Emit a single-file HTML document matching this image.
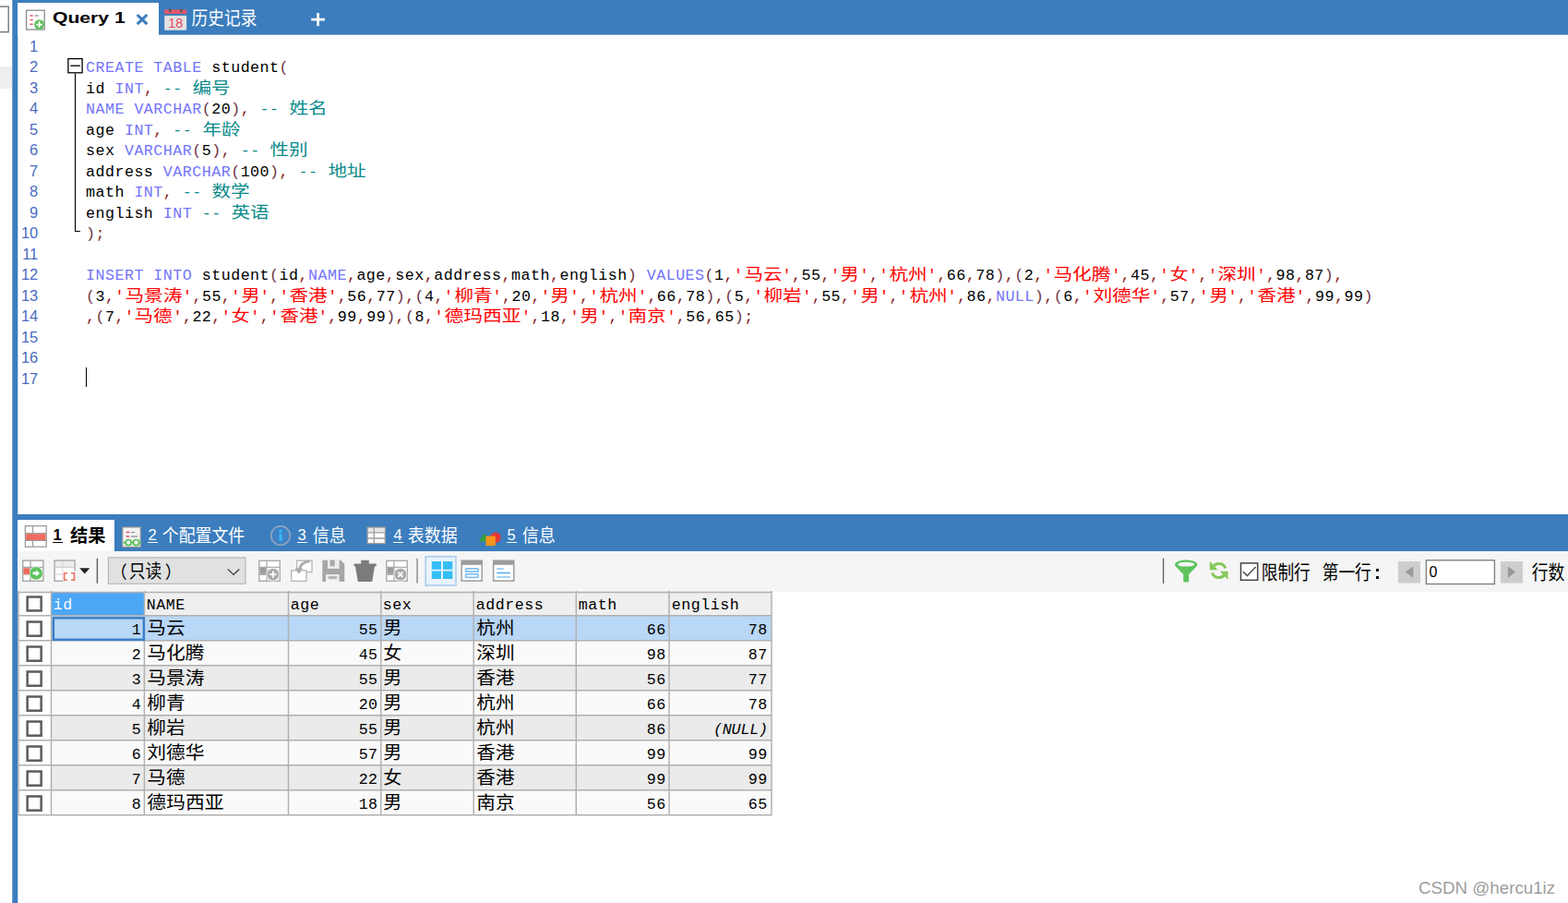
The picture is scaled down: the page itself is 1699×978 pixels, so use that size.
<!DOCTYPE html>
<html lang="zh"><head><meta charset="utf-8"><title>SQLyog</title>
<style>

html,body{margin:0;padding:0}
body{width:1699px;height:978px;overflow:hidden;background:#fff;position:relative;
 font-family:"Liberation Sans",sans-serif;color:#000}
.a{position:absolute}
svg.cj{overflow:visible;vertical-align:baseline;display:inline-block}
svg.cj text{font-family:"Liberation Sans","Noto Sans CJK SC",sans-serif;letter-spacing:0;font-style:normal;font-weight:normal}
svg.cj text.b{font-weight:bold}
.mono{font-family:"Liberation Mono",monospace;font-size:16.664px;letter-spacing:0.48px}
.ln{position:absolute;left:93px;height:22.5px;line-height:22.5px;white-space:pre;
 font-family:"Liberation Mono",monospace;font-size:16.664px;letter-spacing:0.48px;color:#000}
.no{position:absolute;left:18.8px;width:22.5px;text-align:right;height:22.5px;line-height:22.5px;
 font-size:16.5px;color:#4a6ac0}
.k{color:#7474fa} .c{color:#0a8a8a} .s{color:#ff0000} .o{color:#861c1c} .p{color:#6e3446}
.u{text-decoration:underline}

</style></head>
<body>
<!-- window chrome -->
<svg class="a" style="left:0;top:0" width="20" height="40" viewBox="0 0 20 40"><rect x="-2" y="7.1" width="11.2" height="27.6" fill="#fff" stroke="#767676" stroke-width="1.4"/></svg>
<div class="a" style="left:0;top:72px;width:13px;height:24px;background:#eeeeee"></div>
<svg class="a" style="left:12px;top:0" width="9" height="978" viewBox="0 0 9 978"><rect x="1.3" y="0" width="6" height="978" fill="#3b7dbd"/></svg>
<div class="a" style="left:19px;top:0;width:1680px;height:37px;background:#3b7dbd"></div>
<div class="a" style="left:19px;top:37px;width:1680px;height:1px;background:#7aa7d2"></div>
<div class="a" style="left:19px;top:3px;width:153px;height:35px;background:#fff"></div>
<div class="a" style="left:19px;top:556.8px;width:1680px;height:40.2px;background:#3b7dbd"></div>
<div class="a" style="left:19px;top:563px;width:105px;height:34px;background:#fff"></div>
<div class="a" style="left:19px;top:597px;width:1680px;height:43.7px;background:#f5f5f5"></div>
<!-- editor -->
<div class="no" style="top:38.5px">1</div>
<div class="no" style="top:61px">2</div>
<div class="ln" style="top:63px"><span class="k">CREATE</span> <span class="k">TABLE</span> student<span class="p">(</span></div>
<div class="no" style="top:83.5px">3</div>
<div class="ln" style="top:85.5px">id <span class="k">INT</span><span class="o">,</span> <span class="c">-- <svg class="cj" role="img" aria-label="编号" width="42" height="8" viewBox="0 -8 42 8" fill="#0a8a8a" style=""><text x="0.4" y="0" font-size="17.3" textLength="41.2" lengthAdjust="spacingAndGlyphs">编号</text></svg></span></div>
<div class="no" style="top:106px">4</div>
<div class="ln" style="top:108px"><span class="k">NAME</span> <span class="k">VARCHAR</span><span class="p">(</span>20<span class="p">)</span><span class="o">,</span> <span class="c">-- <svg class="cj" role="img" aria-label="姓名" width="42" height="8" viewBox="0 -8 42 8" fill="#0a8a8a" style=""><text x="0.4" y="0" font-size="17.3" textLength="41.2" lengthAdjust="spacingAndGlyphs">姓名</text></svg></span></div>
<div class="no" style="top:128.5px">5</div>
<div class="ln" style="top:130.5px">age <span class="k">INT</span><span class="o">,</span> <span class="c">-- <svg class="cj" role="img" aria-label="年龄" width="42" height="8" viewBox="0 -8 42 8" fill="#0a8a8a" style=""><text x="0.4" y="0" font-size="17.3" textLength="41.2" lengthAdjust="spacingAndGlyphs">年龄</text></svg></span></div>
<div class="no" style="top:151px">6</div>
<div class="ln" style="top:153px">sex <span class="k">VARCHAR</span><span class="p">(</span>5<span class="p">)</span><span class="o">,</span> <span class="c">-- <svg class="cj" role="img" aria-label="性别" width="42" height="8" viewBox="0 -8 42 8" fill="#0a8a8a" style=""><text x="0.4" y="0" font-size="17.3" textLength="41.2" lengthAdjust="spacingAndGlyphs">性别</text></svg></span></div>
<div class="no" style="top:173.5px">7</div>
<div class="ln" style="top:175.5px">address <span class="k">VARCHAR</span><span class="p">(</span>100<span class="p">)</span><span class="o">,</span> <span class="c">-- <svg class="cj" role="img" aria-label="地址" width="42" height="8" viewBox="0 -8 42 8" fill="#0a8a8a" style=""><text x="0.4" y="0" font-size="17.3" textLength="41.2" lengthAdjust="spacingAndGlyphs">地址</text></svg></span></div>
<div class="no" style="top:196px">8</div>
<div class="ln" style="top:198px">math <span class="k">INT</span><span class="o">,</span> <span class="c">-- <svg class="cj" role="img" aria-label="数学" width="42" height="8" viewBox="0 -8 42 8" fill="#0a8a8a" style=""><text x="0.4" y="0" font-size="17.3" textLength="41.2" lengthAdjust="spacingAndGlyphs">数学</text></svg></span></div>
<div class="no" style="top:218.5px">9</div>
<div class="ln" style="top:220.5px">english <span class="k">INT</span> <span class="c">-- <svg class="cj" role="img" aria-label="英语" width="42" height="8" viewBox="0 -8 42 8" fill="#0a8a8a" style=""><text x="0.4" y="0" font-size="17.3" textLength="41.2" lengthAdjust="spacingAndGlyphs">英语</text></svg></span></div>
<div class="no" style="top:241px">10</div>
<div class="ln" style="top:243px"><span class="p">)</span><span class="o">;</span></div>
<div class="no" style="top:263.5px">11</div>
<div class="no" style="top:286px">12</div>
<div class="ln" style="top:288px"><span class="k">INSERT</span> <span class="k">INTO</span> student<span class="p">(</span>id<span class="o">,</span><span class="k">NAME</span><span class="o">,</span>age<span class="o">,</span>sex<span class="o">,</span>address<span class="o">,</span>math<span class="o">,</span>english<span class="p">)</span> <span class="k">VALUES</span><span class="p">(</span>1<span class="o">,</span><span class="s">'<svg class="cj" role="img" aria-label="马云" width="42" height="8" viewBox="0 -8 42 8" fill="#ff0000" style=""><text x="0.4" y="0" font-size="17.3" textLength="41.2" lengthAdjust="spacingAndGlyphs">马云</text></svg>'</span><span class="o">,</span>55<span class="o">,</span><span class="s">'<svg class="cj" role="img" aria-label="男" width="21" height="8" viewBox="0 -8 21 8" fill="#ff0000" style=""><text x="0.4" y="0" font-size="17.3" textLength="20.2" lengthAdjust="spacingAndGlyphs">男</text></svg>'</span><span class="o">,</span><span class="s">'<svg class="cj" role="img" aria-label="杭州" width="42" height="8" viewBox="0 -8 42 8" fill="#ff0000" style=""><text x="0.4" y="0" font-size="17.3" textLength="41.2" lengthAdjust="spacingAndGlyphs">杭州</text></svg>'</span><span class="o">,</span>66<span class="o">,</span>78<span class="p">)</span><span class="o">,</span><span class="p">(</span>2<span class="o">,</span><span class="s">'<svg class="cj" role="img" aria-label="马化腾" width="63" height="8" viewBox="0 -8 63 8" fill="#ff0000" style=""><text x="0.4" y="0" font-size="17.3" textLength="62.2" lengthAdjust="spacingAndGlyphs">马化腾</text></svg>'</span><span class="o">,</span>45<span class="o">,</span><span class="s">'<svg class="cj" role="img" aria-label="女" width="21" height="8" viewBox="0 -8 21 8" fill="#ff0000" style=""><text x="0.4" y="0" font-size="17.3" textLength="20.2" lengthAdjust="spacingAndGlyphs">女</text></svg>'</span><span class="o">,</span><span class="s">'<svg class="cj" role="img" aria-label="深圳" width="42" height="8" viewBox="0 -8 42 8" fill="#ff0000" style=""><text x="0.4" y="0" font-size="17.3" textLength="41.2" lengthAdjust="spacingAndGlyphs">深圳</text></svg>'</span><span class="o">,</span>98<span class="o">,</span>87<span class="p">)</span><span class="o">,</span></div>
<div class="no" style="top:308.5px">13</div>
<div class="ln" style="top:310.5px"><span class="p">(</span>3<span class="o">,</span><span class="s">'<svg class="cj" role="img" aria-label="马景涛" width="63" height="8" viewBox="0 -8 63 8" fill="#ff0000" style=""><text x="0.4" y="0" font-size="17.3" textLength="62.2" lengthAdjust="spacingAndGlyphs">马景涛</text></svg>'</span><span class="o">,</span>55<span class="o">,</span><span class="s">'<svg class="cj" role="img" aria-label="男" width="21" height="8" viewBox="0 -8 21 8" fill="#ff0000" style=""><text x="0.4" y="0" font-size="17.3" textLength="20.2" lengthAdjust="spacingAndGlyphs">男</text></svg>'</span><span class="o">,</span><span class="s">'<svg class="cj" role="img" aria-label="香港" width="42" height="8" viewBox="0 -8 42 8" fill="#ff0000" style=""><text x="0.4" y="0" font-size="17.3" textLength="41.2" lengthAdjust="spacingAndGlyphs">香港</text></svg>'</span><span class="o">,</span>56<span class="o">,</span>77<span class="p">)</span><span class="o">,</span><span class="p">(</span>4<span class="o">,</span><span class="s">'<svg class="cj" role="img" aria-label="柳青" width="42" height="8" viewBox="0 -8 42 8" fill="#ff0000" style=""><text x="0.4" y="0" font-size="17.3" textLength="41.2" lengthAdjust="spacingAndGlyphs">柳青</text></svg>'</span><span class="o">,</span>20<span class="o">,</span><span class="s">'<svg class="cj" role="img" aria-label="男" width="21" height="8" viewBox="0 -8 21 8" fill="#ff0000" style=""><text x="0.4" y="0" font-size="17.3" textLength="20.2" lengthAdjust="spacingAndGlyphs">男</text></svg>'</span><span class="o">,</span><span class="s">'<svg class="cj" role="img" aria-label="杭州" width="42" height="8" viewBox="0 -8 42 8" fill="#ff0000" style=""><text x="0.4" y="0" font-size="17.3" textLength="41.2" lengthAdjust="spacingAndGlyphs">杭州</text></svg>'</span><span class="o">,</span>66<span class="o">,</span>78<span class="p">)</span><span class="o">,</span><span class="p">(</span>5<span class="o">,</span><span class="s">'<svg class="cj" role="img" aria-label="柳岩" width="42" height="8" viewBox="0 -8 42 8" fill="#ff0000" style=""><text x="0.4" y="0" font-size="17.3" textLength="41.2" lengthAdjust="spacingAndGlyphs">柳岩</text></svg>'</span><span class="o">,</span>55<span class="o">,</span><span class="s">'<svg class="cj" role="img" aria-label="男" width="21" height="8" viewBox="0 -8 21 8" fill="#ff0000" style=""><text x="0.4" y="0" font-size="17.3" textLength="20.2" lengthAdjust="spacingAndGlyphs">男</text></svg>'</span><span class="o">,</span><span class="s">'<svg class="cj" role="img" aria-label="杭州" width="42" height="8" viewBox="0 -8 42 8" fill="#ff0000" style=""><text x="0.4" y="0" font-size="17.3" textLength="41.2" lengthAdjust="spacingAndGlyphs">杭州</text></svg>'</span><span class="o">,</span>86<span class="o">,</span><span class="k">NULL</span><span class="p">)</span><span class="o">,</span><span class="p">(</span>6<span class="o">,</span><span class="s">'<svg class="cj" role="img" aria-label="刘德华" width="63" height="8" viewBox="0 -8 63 8" fill="#ff0000" style=""><text x="0.4" y="0" font-size="17.3" textLength="62.2" lengthAdjust="spacingAndGlyphs">刘德华</text></svg>'</span><span class="o">,</span>57<span class="o">,</span><span class="s">'<svg class="cj" role="img" aria-label="男" width="21" height="8" viewBox="0 -8 21 8" fill="#ff0000" style=""><text x="0.4" y="0" font-size="17.3" textLength="20.2" lengthAdjust="spacingAndGlyphs">男</text></svg>'</span><span class="o">,</span><span class="s">'<svg class="cj" role="img" aria-label="香港" width="42" height="8" viewBox="0 -8 42 8" fill="#ff0000" style=""><text x="0.4" y="0" font-size="17.3" textLength="41.2" lengthAdjust="spacingAndGlyphs">香港</text></svg>'</span><span class="o">,</span>99<span class="o">,</span>99<span class="p">)</span></div>
<div class="no" style="top:331px">14</div>
<div class="ln" style="top:333px"><span class="o">,</span><span class="p">(</span>7<span class="o">,</span><span class="s">'<svg class="cj" role="img" aria-label="马德" width="42" height="8" viewBox="0 -8 42 8" fill="#ff0000" style=""><text x="0.4" y="0" font-size="17.3" textLength="41.2" lengthAdjust="spacingAndGlyphs">马德</text></svg>'</span><span class="o">,</span>22<span class="o">,</span><span class="s">'<svg class="cj" role="img" aria-label="女" width="21" height="8" viewBox="0 -8 21 8" fill="#ff0000" style=""><text x="0.4" y="0" font-size="17.3" textLength="20.2" lengthAdjust="spacingAndGlyphs">女</text></svg>'</span><span class="o">,</span><span class="s">'<svg class="cj" role="img" aria-label="香港" width="42" height="8" viewBox="0 -8 42 8" fill="#ff0000" style=""><text x="0.4" y="0" font-size="17.3" textLength="41.2" lengthAdjust="spacingAndGlyphs">香港</text></svg>'</span><span class="o">,</span>99<span class="o">,</span>99<span class="p">)</span><span class="o">,</span><span class="p">(</span>8<span class="o">,</span><span class="s">'<svg class="cj" role="img" aria-label="德玛西亚" width="84" height="8" viewBox="0 -8 84 8" fill="#ff0000" style=""><text x="0.4" y="0" font-size="17.3" textLength="83.2" lengthAdjust="spacingAndGlyphs">德玛西亚</text></svg>'</span><span class="o">,</span>18<span class="o">,</span><span class="s">'<svg class="cj" role="img" aria-label="男" width="21" height="8" viewBox="0 -8 21 8" fill="#ff0000" style=""><text x="0.4" y="0" font-size="17.3" textLength="20.2" lengthAdjust="spacingAndGlyphs">男</text></svg>'</span><span class="o">,</span><span class="s">'<svg class="cj" role="img" aria-label="南京" width="42" height="8" viewBox="0 -8 42 8" fill="#ff0000" style=""><text x="0.4" y="0" font-size="17.3" textLength="41.2" lengthAdjust="spacingAndGlyphs">南京</text></svg>'</span><span class="o">,</span>56<span class="o">,</span>65<span class="p">)</span><span class="o">;</span></div>
<div class="no" style="top:353.5px">15</div>
<div class="no" style="top:376px">16</div>
<div class="no" style="top:398.5px">17</div>
<svg class="a" style="left:70px;top:60.7px" width="24" height="202.5" viewBox="0 0 24 202.5">
<rect x="3.9" y="2.6" width="15.2" height="15.2" fill="#fff" stroke="#000" stroke-width="1.3"/>
<path d="M6.3 10.2H16.9" stroke="#000" stroke-width="1.3"/>
<path d="M11.5 18.4V189.5H17" fill="none" stroke="#000" stroke-width="1.1"/>
</svg>
<div class="a" style="left:92.5px;top:397.6px;width:1.3px;height:21.6px;background:#000"></div>
<!-- top tabs -->
<svg class="a" style="left:27px;top:9px" width="24" height="25" viewBox="0 0 24 25">
<rect x="1.6" y="2.2" width="19.6" height="20.8" fill="#fff" stroke="#8a8a8a" stroke-width="1.3"/>
<path d="M5.5 8h3.2M5.5 12.6h3.2M5.5 17.2h3.2" stroke="#e8505b" stroke-width="1.5"/>
<path d="M10.6 8h4.2" stroke="#9a9a9a" stroke-width="1.4"/>
<circle cx="15.6" cy="17.6" r="5.4" fill="#5cc05c"/>
<path d="M15.6 14.3v6.6M12.3 17.6h6.6" stroke="#fff" stroke-width="1.7"/>
</svg>
<svg class="a" style="left:53.3px;top:7.14px;overflow:visible" width="86.8" height="24.9" viewBox="0 0 86.8 24.9"><text x="4" y="18.26" font-family="Liberation Sans, sans-serif" font-size="16.6" font-weight="bold" fill="#000" textLength="78.8" lengthAdjust="spacingAndGlyphs">Query 1</text></svg>
<svg class="a" style="left:146px;top:13px" width="16" height="16" viewBox="0 0 16 16">
<path d="M2.7 3l10.6 10.2M13.3 3L2.7 13.2" stroke="#3b7dbd" stroke-width="3.1" fill="none"/></svg>
<svg class="a" style="left:177px;top:8px" width="27" height="26" viewBox="0 0 27 26">
<rect x="1.2" y="2.5" width="23.9" height="4.4" fill="#ec5469"/>
<rect x="1.2" y="8.9" width="23.9" height="15.8" fill="#e3e3e3"/>
<rect x="6.1" y="1.2" width="2.5" height="4.2" rx="1" fill="#5a5f66"/>
<rect x="18.2" y="1.2" width="2.5" height="4.2" rx="1" fill="#5a5f66"/>
<text x="13.2" y="22.2" text-anchor="middle" font-family="Liberation Sans, sans-serif" font-size="14.5" fill="#e8465c">18</text>
</svg>
<svg class="cj" role="img" aria-label="历史记录" width="70" height="8" viewBox="0 -8 70 8" fill="#fff" style="position:absolute;left:208px;top:19px"><text x="-0.4" y="0" font-size="20.2" textLength="70.8" lengthAdjust="spacingAndGlyphs">历史记录</text></svg>
<svg class="a" style="left:335px;top:12px" width="20" height="20" viewBox="0 0 20 20"><path d="M9.6 1.9v14.4M2.3 9.1h14.6" stroke="#fff" stroke-width="2.7"/></svg>
<!-- bottom tabs -->
<svg class="a" style="left:26px;top:568px" width="26" height="26" viewBox="0 0 26 26">
<rect x="1.4" y="1.6" width="22.8" height="22.6" fill="#fff" stroke="#9b9b9b" stroke-width="1.3"/>
<path d="M9.6 1.6v22.6M1.4 9.6h22.8M1.4 17.4h22.8" stroke="#9b9b9b" stroke-width="1.2"/>
<rect x="2.1" y="10.2" width="21.4" height="6.8" fill="#ee6c5f"/>
</svg>
<div class="a" style="left:57.6px;top:567.51px;line-height:24px;height:24px;font-size:16.6px;color:#000;white-space:pre;font-weight:bold;">1</div><div class="a" style="left:57.2px;top:586.9px;width:10.6px;height:1.6px;background:#000"></div>
<svg class="cj" role="img" aria-label="结果" width="38.4" height="8" viewBox="0 -8 38.4 8" fill="#000" style="position:absolute;left:75.6px;top:579.2px"><text class="b" x="0" y="0" font-size="19.6" textLength="38.4" lengthAdjust="spacingAndGlyphs">结果</text></svg>
<svg class="a" style="left:131px;top:569px" width="26" height="26" viewBox="0 0 26 26">
<rect x="1.8" y="2" width="19.4" height="21.4" fill="#f4f4f4" stroke="#9a9a9a" stroke-width="1.2"/>
<path d="M5.6 7.6h3.6M5.6 12h3.6" stroke="#ea4f5e" stroke-width="1.5"/>
<path d="M10.8 7.6h4.4M10.8 12h7.2" stroke="#9a9a9a" stroke-width="1.4"/>
<circle cx="8.2" cy="18.6" r="3.1" fill="#f4f4f4" stroke="#58c058" stroke-width="1.7"/>
<circle cx="16.6" cy="18.6" r="3.1" fill="#f4f4f4" stroke="#58c058" stroke-width="1.7"/>
<path d="M11.3 18.4h2.2M2.6 18.6h2.5M19.7 18.6h2.6" stroke="#58c058" stroke-width="1.6"/>
</svg>
<div class="a" style="left:160.6px;top:567.51px;line-height:24px;height:24px;font-size:16.6px;color:#fff;white-space:pre;">2</div><div class="a" style="left:160.2px;top:586.9px;width:10.6px;height:1.2px;background:#fff"></div>
<svg class="cj" role="img" aria-label="个配置文件" width="89" height="8" viewBox="0 -8 89 8" fill="#fff" style="position:absolute;left:176.3px;top:579.2px"><text x="-0.25" y="0" font-size="19.3" textLength="89.5" lengthAdjust="spacingAndGlyphs">个配置文件</text></svg>
<svg class="a" style="left:291px;top:567px" width="26" height="26" viewBox="0 0 26 26">
<circle cx="13" cy="13" r="10.3" fill="#3f82c4" stroke="#8fa6c0" stroke-width="1.6"/>
<circle cx="13" cy="8.2" r="1.8" fill="#35b8f6"/><rect x="11.5" y="11.2" width="3" height="7.8" fill="#35b8f6"/>
</svg>
<div class="a" style="left:322.4px;top:567.51px;line-height:24px;height:24px;font-size:16.6px;color:#fff;white-space:pre;">3</div><div class="a" style="left:322px;top:586.9px;width:10.6px;height:1.2px;background:#fff"></div>
<svg class="cj" role="img" aria-label="信息" width="35.6" height="8" viewBox="0 -8 35.6 8" fill="#fff" style="position:absolute;left:338.6px;top:579.2px"><text x="-0.25" y="0" font-size="19.3" textLength="36.1" lengthAdjust="spacingAndGlyphs">信息</text></svg>
<svg class="a" style="left:396px;top:569px" width="24" height="22" viewBox="0 0 24 22">
<rect x="2.2" y="2.2" width="19" height="17.4" fill="#fff" stroke="#9e9e9e" stroke-width="1.4"/>
<rect x="2.9" y="2.9" width="17.6" height="4.5" fill="#e6e6e6"/>
<path d="M9.3 2.2v17.4M2.2 7.8h19M2.2 14h19" stroke="#9e9e9e" stroke-width="1.3"/>
</svg>
<div class="a" style="left:426.4px;top:567.51px;line-height:24px;height:24px;font-size:16.6px;color:#fff;white-space:pre;">4</div><div class="a" style="left:426px;top:586.9px;width:10.6px;height:1.2px;background:#fff"></div>
<svg class="cj" role="img" aria-label="表数据" width="53.4" height="8" viewBox="0 -8 53.4 8" fill="#fff" style="position:absolute;left:442.3px;top:579.2px"><text x="-0.25" y="0" font-size="19.3" textLength="53.9" lengthAdjust="spacingAndGlyphs">表数据</text></svg>
<svg class="a" style="left:518px;top:574px" width="27" height="19" viewBox="0 0 27 19">
<path d="M1 12.6L6.9 3.2l5.6 9.4z" fill="#359e3c"/>
<circle cx="19" cy="8.2" r="5.7" fill="#e53935"/>
<rect x="8.4" y="6.6" width="10.4" height="10.6" fill="#f7941d"/>
</svg>
<div class="a" style="left:549.4px;top:567.51px;line-height:24px;height:24px;font-size:16.6px;color:#fff;white-space:pre;">5</div><div class="a" style="left:549px;top:586.9px;width:10.6px;height:1.2px;background:#fff"></div>
<svg class="cj" role="img" aria-label="信息" width="35.6" height="8" viewBox="0 -8 35.6 8" fill="#fff" style="position:absolute;left:565.9px;top:579.2px"><text x="-0.25" y="0" font-size="19.3" textLength="36.1" lengthAdjust="spacingAndGlyphs">信息</text></svg>
<!-- toolbar -->
<svg class="a" style="left:19px;top:597px" width="560" height="44" viewBox="0 0 560 44">
<g transform="translate(-19,-597)">
<!-- i1: grid + green arrow -->
<rect x="24.7" y="607.1" width="22.2" height="22.2" fill="#fff" stroke="#a3a3a3" stroke-width="1.4"/>
<path d="M33 607v22M24.7 614.4h22.2" stroke="#a3a3a3" stroke-width="1.3"/><path d="M24.7 622.8h22.2" stroke="#d2d2d2" stroke-width="1.1"/>
<rect x="25.4" y="615.2" width="6.6" height="6.9" fill="#ee6c5f"/>
<circle cx="39.1" cy="620.9" r="7.3" fill="#f5f5f5"/><circle cx="39.1" cy="620.9" r="6.8" fill="#5ec45e"/>
<path d="M35.6 619.6h3.4v-2l4 3.3-4 3.3v-2h-3.4z" fill="#fff"/>
<!-- i2: grid + red brackets -->
<rect x="59.1" y="607.1" width="22" height="22.2" fill="#fff" stroke="#a3a3a3" stroke-width="1.4"/>
<rect x="59.9" y="607.9" width="20.4" height="6.2" fill="#ececec"/>
<path d="M68 608v21" stroke="#dcdcdc" stroke-width="1.2"/><path d="M59 614.4h22M59 622h9" stroke="#d0d0d0" stroke-width="1.2"/>
<rect x="68.2" y="618.6" width="12.2" height="10" fill="#fff"/><path d="M81.1 618.2v11.8M68.4 629.3h13" stroke="#f5f5f5" stroke-width="1.6"/>
<path d="M73 620.7h-3.4v7.6H73M77 620.7h3.4v7.6H77" fill="none" stroke="#ee6c5f" stroke-width="1.6"/>
<path d="M86.2 615.2h11.1l-5.55 6.3z" fill="#222"/>
<rect x="104.7" y="604.8" width="1.4" height="27" fill="#5f5f5f"/>
<!-- combo -->
<rect x="117.4" y="603.9" width="148.6" height="28.3" fill="#e1e1e1" stroke="#adadad" stroke-width="1"/>
<path d="M246.9 616.4l6.2 6 6.2-6" fill="none" stroke="#444" stroke-width="1.4"/>
<!-- iA grid plus (disabled) -->
<g id="gridg"><rect x="280.8" y="607.3" width="22.5" height="22" fill="#fff" stroke="#ababab" stroke-width="1.4"/>
<path d="M289 607v22M280.8 614.4h22.5M280.8 622.4h22.5" stroke="#ababab" stroke-width="1.3"/>
<rect x="281.5" y="615" width="6.8" height="6.8" fill="#9c9c9c"/>
<circle cx="295.9" cy="622.2" r="7.4" fill="#f5f5f5"/><circle cx="295.9" cy="622.2" r="6.5" fill="#ababab"/></g>
<path d="M295.9 618.6v7.2M292.3 622.2h7.2" stroke="#fff" stroke-width="1.7"/>
<!-- iB copy/paste arrow -->
<rect x="321.7" y="607.2" width="16.3" height="12.4" fill="#fff" stroke="#b4b4b4" stroke-width="1.3"/>
<rect x="315.7" y="617.8" width="16.3" height="11.6" fill="#fff" stroke="#b4b4b4" stroke-width="1.3"/>
<path d="M335.5 607.6c-6 .8-10.2 4.2-11.2 9.4" fill="none" stroke="#ababab" stroke-width="2.6"/>
<path d="M319.6 615.6h8.6l-4.3 6.2z" fill="#ababab"/>
<!-- iC save -->
<path d="M349.3 606.7h20l4 4v19.3h-24z" fill="#a6a6a6"/>
<rect x="355" y="606.7" width="12.6" height="9.2" fill="#ececec"/><rect x="357.6" y="606.7" width="5" height="6.6" fill="#a6a6a6"/>
<rect x="353" y="622.2" width="14.6" height="7.8" fill="#f2f2f2"/><rect x="355.6" y="623.9" width="9.6" height="3.3" fill="#b6b6b6"/>
<!-- iD trash -->
<path d="M391.2 606.7h8.6v3.9h7.9v2.6h-1.7l-2.8 16.8h-15.4l-2.8-16.8h-1.4v-2.6h7.6z" fill="#7b7b7b"/>
<!-- iE grid x -->
<use href="#gridg" x="138"/>
<path d="M431.3 619.6l5.2 5.2M436.5 619.6l-5.2 5.2" stroke="#fff" stroke-width="1.8"/>
<rect x="451.2" y="604.8" width="1.7" height="26.8" fill="#9c9c9c"/>
<!-- views -->
<rect x="461.2" y="602.8" width="32.8" height="31.2" fill="#eaf3fb" stroke="#a5c9ef" stroke-width="1.5"/>
<path d="M467.8 607.9h10.2v8.8h-10.2zM480 607.9h10.3v8.8H480zM467.8 618.5h10.2v8.6h-10.2zM480 618.5h10.3v8.6H480z" fill="#34bef5"/>
<g id="frm"><rect x="499.4" y="606.5" width="23.6" height="23.4" fill="#9c9c9c"/><rect x="500.9" y="611.8" width="20.6" height="16.6" fill="#fff"/></g>
<rect x="504.6" y="615.8" width="13.6" height="3.4" rx=".7" fill="#fff" stroke="#7fc0f2" stroke-width="1.7"/>
<rect x="504.6" y="621.9" width="13.6" height="3.4" rx=".7" fill="#fff" stroke="#7fc0f2" stroke-width="1.7"/>
<use href="#frm" x="34.5"/>
<path d="M538.3 616h7.4M538.3 625h14.8" stroke="#86c5f3" stroke-width="1.5"/><path d="M538.3 620.5h14.8" stroke="#4aa8ee" stroke-width="1.4"/>
</g></svg>
<svg class="cj" role="img" aria-label="（" width="17.5" height="8" viewBox="0 -8 17.5 8" fill="#000" style="position:absolute;left:119.7px;top:617.7px"><text x="-0.25" y="0" font-size="18.6" textLength="18" lengthAdjust="spacingAndGlyphs">（</text></svg>
<svg class="cj" role="img" aria-label="只读" width="35" height="8" viewBox="0 -8 35 8" fill="#000" style="position:absolute;left:140.3px;top:618.3px"><text x="-0.25" y="0" font-size="20.4" textLength="35.5" lengthAdjust="spacingAndGlyphs">只读</text></svg>
<svg class="cj" role="img" aria-label="）" width="17.5" height="8" viewBox="0 -8 17.5 8" fill="#000" style="position:absolute;left:178.8px;top:617.7px"><text x="-0.25" y="0" font-size="18.6" textLength="18" lengthAdjust="spacingAndGlyphs">）</text></svg>
<svg class="a" style="left:1255px;top:597px" width="444" height="44" viewBox="1255 597 444 44">
<rect x="1259.9" y="604.6" width="1.3" height="27.2" fill="#5a5a5a"/>
<path d="M1273 611.500c0-2.700 5.500-4.900 12.200-4.900s12.200 2.200 12.200 4.900c0 .9-.5 1.700-1.400 2.400l-7.800 8v7.500c0 .6-1.300 1.100-3 1.100s-3-.5-3-1.100v-7.500l-7.800-8c-.9-.7-1.400-1.500-1.400-2.400z" fill="#5ec45e"/>
<ellipse cx="1285.2" cy="611.2" rx="9" ry="2.4" fill="#f5f5f5"/>
<path d="M1327.9 615.4A7.6 7.6 0 0 0 1314.3 614M1313.5 620.4A7.6 7.6 0 0 0 1327.2 621.9" fill="none" stroke="#86c85c" stroke-width="3"/>
<path d="M1310.8 607.8v9.4h8.8zM1330.6 628v-9.2h-8.8z" fill="#86c85c"/>
<rect x="1344.500" y="609.900" width="18.200" height="18.400" fill="#fff" stroke="#444" stroke-width="1.5"/>
<path d="M1346.900 619.100l4.500 4.500 9.200-9.500" fill="none" stroke="#555" stroke-width="1.5"/>
<rect x="1514.900" y="608.100" width="24.100" height="23.400" fill="#cdcdcd"/><path d="M1531.300 613.300v12.600l-8.500-6.300z" fill="#9a9a9a"/>
<rect x="1626" y="608.100" width="24" height="23.400" fill="#cdcdcd"/><path d="M1633.800 613.300v12.600l8.500-6.300z" fill="#9a9a9a"/>
<rect x="1545.400" y="606.800" width="74" height="25.700" fill="#fff" stroke="#7a7a7a" stroke-width="1.3"/>
</svg>
<svg class="cj" role="img" aria-label="限制行" width="52.5" height="8" viewBox="0 -8 52.5 8" fill="#000" style="position:absolute;left:1367.3px;top:619.2px"><text x="-0.35" y="0" font-size="21" textLength="53.2" lengthAdjust="spacingAndGlyphs">限制行</text></svg>
<svg class="cj" role="img" aria-label="第一行" width="52.5" height="8" viewBox="0 -8 52.5 8" fill="#000" style="position:absolute;left:1432.9px;top:619.2px"><text x="-0.35" y="0" font-size="21" textLength="53.2" lengthAdjust="spacingAndGlyphs">第一行</text></svg>
<div class="a" style="left:1491.2px;top:616.2px;width:3px;height:3.1px;background:#111"></div><div class="a" style="left:1491.2px;top:623.8px;width:3px;height:3.1px;background:#111"></div>
<svg class="cj" role="img" aria-label="行数" width="35" height="8" viewBox="0 -8 35 8" fill="#000" style="position:absolute;left:1660px;top:619.2px"><text x="-0.35" y="0" font-size="21" textLength="35.7" lengthAdjust="spacingAndGlyphs">行数</text></svg>
<div class="a" style="left:1548.6px;top:608.11px;line-height:24px;height:24px;font-size:16px;color:#000;white-space:pre;">0</div>
<!-- result grid -->
<div class="a" style="left:20px;top:641px;width:816px;height:26px;background:#efefef"></div>
<div class="a" style="left:20px;top:641px;width:35px;height:242px;background:#fff"></div>
<div class="a" style="left:55px;top:641px;width:101px;height:26px;background:#4ca7f6"></div>
<div class="a" style="left:55px;top:667px;width:781px;height:27px;background:#b9d7f6"></div>
<div class="a" style="left:55px;top:694px;width:781px;height:27px;background:#fafafa"></div>
<div class="a" style="left:55px;top:721px;width:781px;height:27px;background:#ebebeb"></div>
<div class="a" style="left:55px;top:748px;width:781px;height:27px;background:#fafafa"></div>
<div class="a" style="left:55px;top:775px;width:781px;height:27px;background:#ebebeb"></div>
<div class="a" style="left:55px;top:802px;width:781px;height:27px;background:#fafafa"></div>
<div class="a" style="left:55px;top:829px;width:781px;height:27px;background:#ebebeb"></div>
<div class="a" style="left:55px;top:856px;width:781px;height:27px;background:#fafafa"></div>
<svg class="a" style="left:20px;top:640px;overflow:visible" width="818" height="245" viewBox="0 0 818 245"><path d="M0.1 0V242.8M35.5 0V242.8M136.4 0V242.8M292.5 0V242.8M392.8 0V242.8M493.2 0V242.8M604.3 0V242.8M705.0 0V242.8M816.0 0V242.8M-0.5 1.4H816.6M-0.5 26.8H816.6M-0.5 53.8H816.6M-0.5 80.8H816.6M-0.5 107.8H816.6M-0.5 134.8H816.6M-0.5 161.8H816.6M-0.5 188.8H816.6M-0.5 215.8H816.6M-0.5 242.8H816.6" stroke="#b0b0b0" stroke-width="1.45" fill="none"/><rect x="37.85" y="29.30" width="98" height="23.5" fill="none" stroke="#3b80c6" stroke-width="2.5"/></svg>
<svg class="a" style="left:20px;top:641px" width="36" height="242" viewBox="0 0 36 242"><rect x="9.65" y="5.50" width="15" height="14.9" fill="#fff" stroke="#5c5c5c" stroke-width="2.5"/><rect x="9.65" y="32.50" width="15" height="15.2" fill="#fff" stroke="#5c5c5c" stroke-width="2.5"/><rect x="9.65" y="59.50" width="15" height="15.2" fill="#fff" stroke="#5c5c5c" stroke-width="2.5"/><rect x="9.65" y="86.50" width="15" height="15.2" fill="#fff" stroke="#5c5c5c" stroke-width="2.5"/><rect x="9.65" y="113.50" width="15" height="15.2" fill="#fff" stroke="#5c5c5c" stroke-width="2.5"/><rect x="9.65" y="140.50" width="15" height="15.2" fill="#fff" stroke="#5c5c5c" stroke-width="2.5"/><rect x="9.65" y="167.50" width="15" height="15.2" fill="#fff" stroke="#5c5c5c" stroke-width="2.5"/><rect x="9.65" y="194.50" width="15" height="15.2" fill="#fff" stroke="#5c5c5c" stroke-width="2.5"/><rect x="9.65" y="221.50" width="15" height="15.2" fill="#fff" stroke="#5c5c5c" stroke-width="2.5"/></svg>
<div class="a mono" style="left:57.8px;top:642.25px;height:27px;line-height:27px;white-space:pre;color:#fff;">id</div>
<div class="a mono" style="left:158.8px;top:642.25px;height:27px;line-height:27px;white-space:pre;color:#000;">NAME</div>
<div class="a mono" style="left:314.8px;top:642.25px;height:27px;line-height:27px;white-space:pre;color:#000;">age</div>
<div class="a mono" style="left:414.8px;top:642.25px;height:27px;line-height:27px;white-space:pre;color:#000;">sex</div>
<div class="a mono" style="left:515.8px;top:642.25px;height:27px;line-height:27px;white-space:pre;color:#000;">address</div>
<div class="a mono" style="left:626.8px;top:642.25px;height:27px;line-height:27px;white-space:pre;color:#000;">math</div>
<div class="a mono" style="left:727.8px;top:642.25px;height:27px;line-height:27px;white-space:pre;color:#000;">english</div>
<div class="a mono" style="left:55px;width:98.2px;text-align:right;top:668.75px;height:27px;line-height:27px;white-space:pre;color:#000;">1</div>
<div class="a mono" style="left:158.8px;top:668.75px;height:27px;line-height:27px;white-space:pre;color:#000;"><svg class="cj" role="img" aria-label="马云" width="42" height="8" viewBox="0 -8 42 8" fill="#000" style=""><text x="0.3" y="0.4" font-size="19.4" textLength="41.2" lengthAdjust="spacingAndGlyphs">马云</text></svg></div>
<div class="a mono" style="left:312px;width:97.6px;text-align:right;top:668.75px;height:27px;line-height:27px;white-space:pre;color:#000;">55</div>
<div class="a mono" style="left:414.8px;top:668.75px;height:27px;line-height:27px;white-space:pre;color:#000;"><svg class="cj" role="img" aria-label="男" width="21" height="8" viewBox="0 -8 21 8" fill="#000" style=""><text x="0.3" y="0.4" font-size="19.4" textLength="20.2" lengthAdjust="spacingAndGlyphs">男</text></svg></div>
<div class="a mono" style="left:515.8px;top:668.75px;height:27px;line-height:27px;white-space:pre;color:#000;"><svg class="cj" role="img" aria-label="杭州" width="42" height="8" viewBox="0 -8 42 8" fill="#000" style=""><text x="0.3" y="0.4" font-size="19.4" textLength="41.2" lengthAdjust="spacingAndGlyphs">杭州</text></svg></div>
<div class="a mono" style="left:624px;width:97.8px;text-align:right;top:668.75px;height:27px;line-height:27px;white-space:pre;color:#000;">66</div>
<div class="a mono" style="left:725px;width:106.8px;text-align:right;top:668.75px;height:27px;line-height:27px;white-space:pre;color:#000;">78</div>
<div class="a mono" style="left:55px;width:98.2px;text-align:right;top:695.75px;height:27px;line-height:27px;white-space:pre;color:#000;">2</div>
<div class="a mono" style="left:158.8px;top:695.75px;height:27px;line-height:27px;white-space:pre;color:#000;"><svg class="cj" role="img" aria-label="马化腾" width="63" height="8" viewBox="0 -8 63 8" fill="#000" style=""><text x="0.3" y="0.4" font-size="19.4" textLength="62.2" lengthAdjust="spacingAndGlyphs">马化腾</text></svg></div>
<div class="a mono" style="left:312px;width:97.6px;text-align:right;top:695.75px;height:27px;line-height:27px;white-space:pre;color:#000;">45</div>
<div class="a mono" style="left:414.8px;top:695.75px;height:27px;line-height:27px;white-space:pre;color:#000;"><svg class="cj" role="img" aria-label="女" width="21" height="8" viewBox="0 -8 21 8" fill="#000" style=""><text x="0.3" y="0.4" font-size="19.4" textLength="20.2" lengthAdjust="spacingAndGlyphs">女</text></svg></div>
<div class="a mono" style="left:515.8px;top:695.75px;height:27px;line-height:27px;white-space:pre;color:#000;"><svg class="cj" role="img" aria-label="深圳" width="42" height="8" viewBox="0 -8 42 8" fill="#000" style=""><text x="0.3" y="0.4" font-size="19.4" textLength="41.2" lengthAdjust="spacingAndGlyphs">深圳</text></svg></div>
<div class="a mono" style="left:624px;width:97.8px;text-align:right;top:695.75px;height:27px;line-height:27px;white-space:pre;color:#000;">98</div>
<div class="a mono" style="left:725px;width:106.8px;text-align:right;top:695.75px;height:27px;line-height:27px;white-space:pre;color:#000;">87</div>
<div class="a mono" style="left:55px;width:98.2px;text-align:right;top:722.75px;height:27px;line-height:27px;white-space:pre;color:#000;">3</div>
<div class="a mono" style="left:158.8px;top:722.75px;height:27px;line-height:27px;white-space:pre;color:#000;"><svg class="cj" role="img" aria-label="马景涛" width="63" height="8" viewBox="0 -8 63 8" fill="#000" style=""><text x="0.3" y="0.4" font-size="19.4" textLength="62.2" lengthAdjust="spacingAndGlyphs">马景涛</text></svg></div>
<div class="a mono" style="left:312px;width:97.6px;text-align:right;top:722.75px;height:27px;line-height:27px;white-space:pre;color:#000;">55</div>
<div class="a mono" style="left:414.8px;top:722.75px;height:27px;line-height:27px;white-space:pre;color:#000;"><svg class="cj" role="img" aria-label="男" width="21" height="8" viewBox="0 -8 21 8" fill="#000" style=""><text x="0.3" y="0.4" font-size="19.4" textLength="20.2" lengthAdjust="spacingAndGlyphs">男</text></svg></div>
<div class="a mono" style="left:515.8px;top:722.75px;height:27px;line-height:27px;white-space:pre;color:#000;"><svg class="cj" role="img" aria-label="香港" width="42" height="8" viewBox="0 -8 42 8" fill="#000" style=""><text x="0.3" y="0.4" font-size="19.4" textLength="41.2" lengthAdjust="spacingAndGlyphs">香港</text></svg></div>
<div class="a mono" style="left:624px;width:97.8px;text-align:right;top:722.75px;height:27px;line-height:27px;white-space:pre;color:#000;">56</div>
<div class="a mono" style="left:725px;width:106.8px;text-align:right;top:722.75px;height:27px;line-height:27px;white-space:pre;color:#000;">77</div>
<div class="a mono" style="left:55px;width:98.2px;text-align:right;top:749.75px;height:27px;line-height:27px;white-space:pre;color:#000;">4</div>
<div class="a mono" style="left:158.8px;top:749.75px;height:27px;line-height:27px;white-space:pre;color:#000;"><svg class="cj" role="img" aria-label="柳青" width="42" height="8" viewBox="0 -8 42 8" fill="#000" style=""><text x="0.3" y="0.4" font-size="19.4" textLength="41.2" lengthAdjust="spacingAndGlyphs">柳青</text></svg></div>
<div class="a mono" style="left:312px;width:97.6px;text-align:right;top:749.75px;height:27px;line-height:27px;white-space:pre;color:#000;">20</div>
<div class="a mono" style="left:414.8px;top:749.75px;height:27px;line-height:27px;white-space:pre;color:#000;"><svg class="cj" role="img" aria-label="男" width="21" height="8" viewBox="0 -8 21 8" fill="#000" style=""><text x="0.3" y="0.4" font-size="19.4" textLength="20.2" lengthAdjust="spacingAndGlyphs">男</text></svg></div>
<div class="a mono" style="left:515.8px;top:749.75px;height:27px;line-height:27px;white-space:pre;color:#000;"><svg class="cj" role="img" aria-label="杭州" width="42" height="8" viewBox="0 -8 42 8" fill="#000" style=""><text x="0.3" y="0.4" font-size="19.4" textLength="41.2" lengthAdjust="spacingAndGlyphs">杭州</text></svg></div>
<div class="a mono" style="left:624px;width:97.8px;text-align:right;top:749.75px;height:27px;line-height:27px;white-space:pre;color:#000;">66</div>
<div class="a mono" style="left:725px;width:106.8px;text-align:right;top:749.75px;height:27px;line-height:27px;white-space:pre;color:#000;">78</div>
<div class="a mono" style="left:55px;width:98.2px;text-align:right;top:776.75px;height:27px;line-height:27px;white-space:pre;color:#000;">5</div>
<div class="a mono" style="left:158.8px;top:776.75px;height:27px;line-height:27px;white-space:pre;color:#000;"><svg class="cj" role="img" aria-label="柳岩" width="42" height="8" viewBox="0 -8 42 8" fill="#000" style=""><text x="0.3" y="0.4" font-size="19.4" textLength="41.2" lengthAdjust="spacingAndGlyphs">柳岩</text></svg></div>
<div class="a mono" style="left:312px;width:97.6px;text-align:right;top:776.75px;height:27px;line-height:27px;white-space:pre;color:#000;">55</div>
<div class="a mono" style="left:414.8px;top:776.75px;height:27px;line-height:27px;white-space:pre;color:#000;"><svg class="cj" role="img" aria-label="男" width="21" height="8" viewBox="0 -8 21 8" fill="#000" style=""><text x="0.3" y="0.4" font-size="19.4" textLength="20.2" lengthAdjust="spacingAndGlyphs">男</text></svg></div>
<div class="a mono" style="left:515.8px;top:776.75px;height:27px;line-height:27px;white-space:pre;color:#000;"><svg class="cj" role="img" aria-label="杭州" width="42" height="8" viewBox="0 -8 42 8" fill="#000" style=""><text x="0.3" y="0.4" font-size="19.4" textLength="41.2" lengthAdjust="spacingAndGlyphs">杭州</text></svg></div>
<div class="a mono" style="left:624px;width:97.8px;text-align:right;top:776.75px;height:27px;line-height:27px;white-space:pre;color:#000;">86</div>
<div class="a mono" style="left:725px;width:106.8px;text-align:right;top:776.75px;height:27px;line-height:27px;white-space:pre;color:#000;font-style:italic;letter-spacing:-0.2px;">(NULL)</div>
<div class="a mono" style="left:55px;width:98.2px;text-align:right;top:803.75px;height:27px;line-height:27px;white-space:pre;color:#000;">6</div>
<div class="a mono" style="left:158.8px;top:803.75px;height:27px;line-height:27px;white-space:pre;color:#000;"><svg class="cj" role="img" aria-label="刘德华" width="63" height="8" viewBox="0 -8 63 8" fill="#000" style=""><text x="0.3" y="0.4" font-size="19.4" textLength="62.2" lengthAdjust="spacingAndGlyphs">刘德华</text></svg></div>
<div class="a mono" style="left:312px;width:97.6px;text-align:right;top:803.75px;height:27px;line-height:27px;white-space:pre;color:#000;">57</div>
<div class="a mono" style="left:414.8px;top:803.75px;height:27px;line-height:27px;white-space:pre;color:#000;"><svg class="cj" role="img" aria-label="男" width="21" height="8" viewBox="0 -8 21 8" fill="#000" style=""><text x="0.3" y="0.4" font-size="19.4" textLength="20.2" lengthAdjust="spacingAndGlyphs">男</text></svg></div>
<div class="a mono" style="left:515.8px;top:803.75px;height:27px;line-height:27px;white-space:pre;color:#000;"><svg class="cj" role="img" aria-label="香港" width="42" height="8" viewBox="0 -8 42 8" fill="#000" style=""><text x="0.3" y="0.4" font-size="19.4" textLength="41.2" lengthAdjust="spacingAndGlyphs">香港</text></svg></div>
<div class="a mono" style="left:624px;width:97.8px;text-align:right;top:803.75px;height:27px;line-height:27px;white-space:pre;color:#000;">99</div>
<div class="a mono" style="left:725px;width:106.8px;text-align:right;top:803.75px;height:27px;line-height:27px;white-space:pre;color:#000;">99</div>
<div class="a mono" style="left:55px;width:98.2px;text-align:right;top:830.75px;height:27px;line-height:27px;white-space:pre;color:#000;">7</div>
<div class="a mono" style="left:158.8px;top:830.75px;height:27px;line-height:27px;white-space:pre;color:#000;"><svg class="cj" role="img" aria-label="马德" width="42" height="8" viewBox="0 -8 42 8" fill="#000" style=""><text x="0.3" y="0.4" font-size="19.4" textLength="41.2" lengthAdjust="spacingAndGlyphs">马德</text></svg></div>
<div class="a mono" style="left:312px;width:97.6px;text-align:right;top:830.75px;height:27px;line-height:27px;white-space:pre;color:#000;">22</div>
<div class="a mono" style="left:414.8px;top:830.75px;height:27px;line-height:27px;white-space:pre;color:#000;"><svg class="cj" role="img" aria-label="女" width="21" height="8" viewBox="0 -8 21 8" fill="#000" style=""><text x="0.3" y="0.4" font-size="19.4" textLength="20.2" lengthAdjust="spacingAndGlyphs">女</text></svg></div>
<div class="a mono" style="left:515.8px;top:830.75px;height:27px;line-height:27px;white-space:pre;color:#000;"><svg class="cj" role="img" aria-label="香港" width="42" height="8" viewBox="0 -8 42 8" fill="#000" style=""><text x="0.3" y="0.4" font-size="19.4" textLength="41.2" lengthAdjust="spacingAndGlyphs">香港</text></svg></div>
<div class="a mono" style="left:624px;width:97.8px;text-align:right;top:830.75px;height:27px;line-height:27px;white-space:pre;color:#000;">99</div>
<div class="a mono" style="left:725px;width:106.8px;text-align:right;top:830.75px;height:27px;line-height:27px;white-space:pre;color:#000;">99</div>
<div class="a mono" style="left:55px;width:98.2px;text-align:right;top:857.75px;height:27px;line-height:27px;white-space:pre;color:#000;">8</div>
<div class="a mono" style="left:158.8px;top:857.75px;height:27px;line-height:27px;white-space:pre;color:#000;"><svg class="cj" role="img" aria-label="德玛西亚" width="84" height="8" viewBox="0 -8 84 8" fill="#000" style=""><text x="0.3" y="0.4" font-size="19.4" textLength="83.2" lengthAdjust="spacingAndGlyphs">德玛西亚</text></svg></div>
<div class="a mono" style="left:312px;width:97.6px;text-align:right;top:857.75px;height:27px;line-height:27px;white-space:pre;color:#000;">18</div>
<div class="a mono" style="left:414.8px;top:857.75px;height:27px;line-height:27px;white-space:pre;color:#000;"><svg class="cj" role="img" aria-label="男" width="21" height="8" viewBox="0 -8 21 8" fill="#000" style=""><text x="0.3" y="0.4" font-size="19.4" textLength="20.2" lengthAdjust="spacingAndGlyphs">男</text></svg></div>
<div class="a mono" style="left:515.8px;top:857.75px;height:27px;line-height:27px;white-space:pre;color:#000;"><svg class="cj" role="img" aria-label="南京" width="42" height="8" viewBox="0 -8 42 8" fill="#000" style=""><text x="0.3" y="0.4" font-size="19.4" textLength="41.2" lengthAdjust="spacingAndGlyphs">南京</text></svg></div>
<div class="a mono" style="left:624px;width:97.8px;text-align:right;top:857.75px;height:27px;line-height:27px;white-space:pre;color:#000;">56</div>
<div class="a mono" style="left:725px;width:106.8px;text-align:right;top:857.75px;height:27px;line-height:27px;white-space:pre;color:#000;">65</div>
<!-- watermark -->
<svg class="a" style="left:1532.9px;top:947.22px;overflow:visible" width="156.2" height="28.2" viewBox="0 0 156.2 28.2"><text x="4" y="20.68" font-family="Liberation Sans, sans-serif" font-size="18.8" font-weight="normal" fill="#9d9d9d" textLength="148.2" lengthAdjust="spacingAndGlyphs">CSDN @hercu1iz</text></svg>
</body></html>
